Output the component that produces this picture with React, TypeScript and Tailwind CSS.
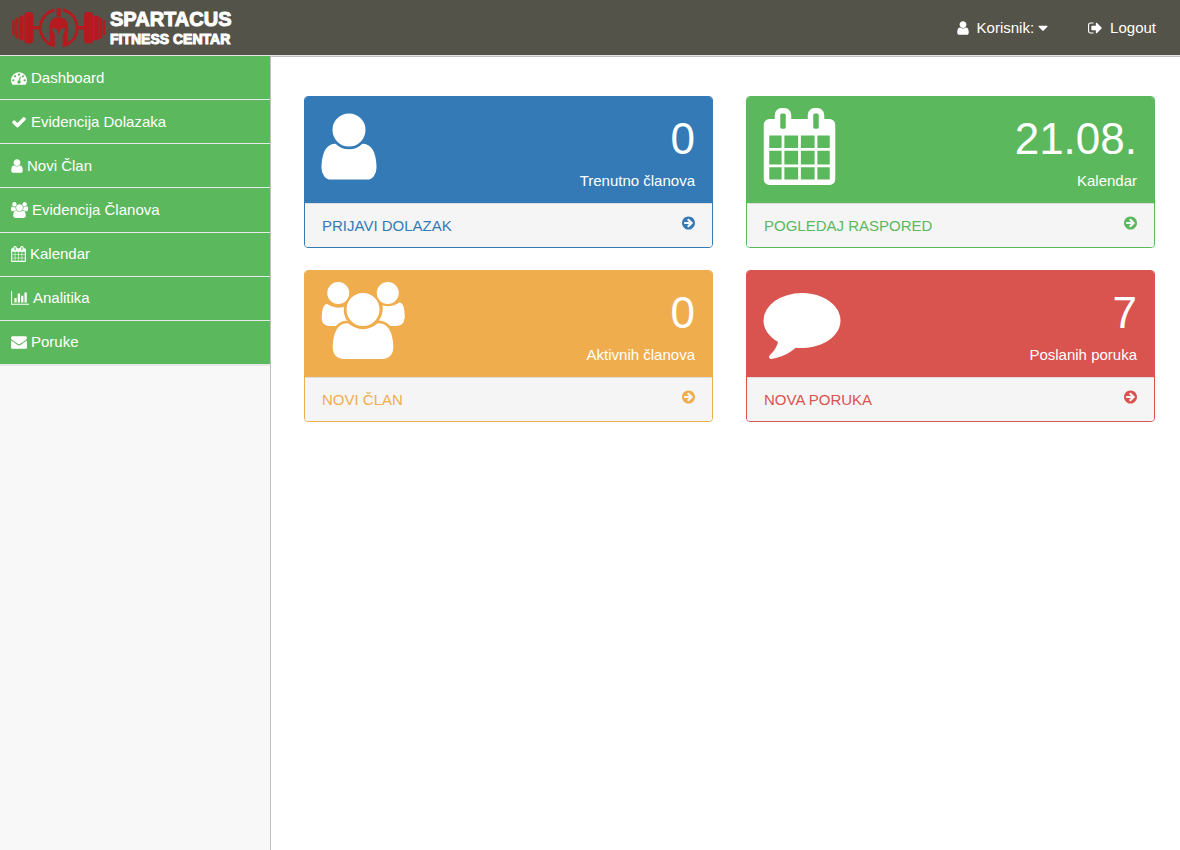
import React from "react";

type IconProps = { d: string; box?: string; className: string };

function Icon({ d, box = "0 0 1792 1792", className }: IconProps) {
  return (
    <svg viewBox={box} className={className} fill="currentColor" aria-hidden="true">
      <path d={d} />
    </svg>
  );
}

const USER =
  "M1536 1399q0 109-62.5 187t-150.5 78h-854q-88 0-150.5-78t-62.5-187q0-85 8.5-160.5t31.5-152 58.5-131 94-89 134.5-34.5q131 128 313 128t313-128q76 0 134.5 34.5t94 89 58.5 131 31.5 152 8.5 160.5zm-256-887q0 159-112.5 271.5t-271.5 112.5-271.5-112.5-112.5-271.5 112.5-271.5 271.5-112.5 271.5 112.5 112.5 271.5z";
const CHECK =
  "M1671 566q0 40-28 68l-724 724-136 136q-28 28-68 28t-68-28l-136-136-362-362q-28-28-28-68t28-68l136-136q28-28 68-28t68 28l294 295 656-657q28-28 68-28t68 28l136 136q28 28 28 68z";
const CALENDAR =
  "M192 1664h288v-288h-288v288zm352 0h320v-288h-320v288zm-352-352h288v-320h-288v320zm352 0h320v-320h-320v320zm-352-384h288v-288h-288v288zm736 736h320v-288h-320v288zm-384-736h320v-288h-320v288zm768 736h288v-288h-288v288zm-384-352h320v-320h-320v320zm-352-864v-288q0-13-9.5-22.5t-22.5-9.5h-64q-13 0-22.5 9.5t-9.5 22.5v288q0 13 9.5 22.5t22.5 9.5h64q13 0 22.5-9.5t9.5-22.5zm736 864h288v-320h-288v320zm-384-384h320v-288h-320v288zm384 0h288v-288h-288v288zm32-480v-288q0-13-9.5-22.5t-22.5-9.5h-64q-13 0-22.5 9.5t-9.5 22.5v288q0 13 9.5 22.5t22.5 9.5h64q13 0 22.5-9.5t9.5-22.5zm384-64v1280q0 52-38 90t-90 38h-1408q-52 0-90-38t-38-90v-1280q0-52 38-90t90-38h128v-96q0-66 47-113t113-47h64q66 0 113 47t47 113v96h384v-96q0-66 47-113t113-47h64q66 0 113 47t47 113v96h128q52 0 90 38t38 90z";
const USERS =
  "M657 896q-162 5-265 128h-134q-82 0-138-40.5t-56-118.5q0-353 124-353 6 0 43.5 21t97.5 42.5 119 21.5q67 0 133-23-5 37-5 66 0 159 93 290zm1071 637q0 120-73 189.5t-194 69.5h-874q-121 0-194-69.5t-73-189.5q0-53 3.5-103.5t14-109 26.5-108.5 43-97.5 62-81 85.5-53.5 111.5-20q10 0 43 21.5t73 48 107 48 135 21.5 135-21.5 107-48 73-48 43-21.5q61 0 111.5 20t85.5 53.5 62 81 43 97.5 26.5 108.5 14 109 3.5 103.5zm-1024-1277q0 106-75 181t-181 75-181-75-75-181 75-181 181-75 181 75 75 181zm704 384q0 159-112.5 271.5t-271.5 112.5-271.5-112.5-112.5-271.5 112.5-271.5 271.5-112.5 271.5 112.5 112.5 271.5zm576 225q0 78-56 118.5t-138 40.5h-134q-103-123-265-128 93-131 93-290 0-29-5-66 66 23 133 23 59 0 119-21.5t97.5-42.5 43.5-21q124 0 124 353zm-128-609q0 106-75 181t-181 75-181-75-75-181 75-181 181-75 181 75 75 181z";
const COMMENT =
  "M1792 896q0 174-120 321.5t-326 233-450 85.5q-70 0-145-8-198 175-460 242-49 14-114 22-17 2-30.5-9t-17.5-29v-1q-3-4-.5-12t2-10 4.5-9.5l6-9 7-8.5 8-9q7-8 31-34.5t34.5-38 31-39.5 32.5-51 27-59 26-76q-157-89-247.5-220t-90.5-281q0-130 71-248.5t191-204.5 286-136.5 348-50.5q244 0 450 85.5t326 233 120 321.5z";
const GAUGE =
  "M384 1152q0-53-37.5-90.5t-90.5-37.5-90.5 37.5-37.5 90.5 37.5 90.5 90.5 37.5 90.5-37.5 37.5-90.5zm192-448q0-53-37.5-90.5t-90.5-37.5-90.5 37.5-37.5 90.5 37.5 90.5 90.5 37.5 90.5-37.5 37.5-90.5zm428 481l101-382q6-26-7.5-48.5t-38.5-29.5-48 6.5-30 39.5l-101 382q-60 5-107 43.5t-63 98.5q-20 77 20 146t117 89 146-20 89-117q16-60-6-117t-72-91zm660-33q0-53-37.5-90.5t-90.5-37.5-90.5 37.5-37.5 90.5 37.5 90.5 90.5 37.5 90.5-37.5 37.5-90.5zm-640-640q0-53-37.5-90.5t-90.5-37.5-90.5 37.5-37.5 90.5 37.5 90.5 90.5 37.5 90.5-37.5 37.5-90.5zm448 192q0-53-37.5-90.5t-90.5-37.5-90.5 37.5-37.5 90.5 37.5 90.5 90.5 37.5 90.5-37.5 37.5-90.5zm320 448q0 261-141 483-19 29-54 29h-1402q-35 0-54-29-141-221-141-483 0-182 71-348t191-286 286-191 348-71 348 71 286 191 191 286 71 348z";
const CHART =
  "M640 896v512h-256v-512h256zm384-512v1024h-256v-1024h256zm1024 1152v128h-2048v-1536h128v1408h1920zm-640-896v768h-256v-768h256zm384-384v1152h-256v-1152h256z";
const ENVELOPE =
  "M1792 710v794q0 66-47 113t-113 47h-1472q-66 0-113-47t-47-113v-794q44 49 101 87 362 246 497 345 57 42 92.5 65.5t94.5 48 110 24.5h2q51 0 110-24.5t94.5-48 92.5-65.5q170-123 498-345 57-39 100-87zm0-294q0 79-49 151t-122 123q-376 261-468 325-10 7-42.5 31t-54 38.5-52 32.5-57.5 27-50 9h-2q-23 0-50-9t-57.5-27-52-32.5-54-38.5-42.5-31q-91-64-262-182.5t-205-142.5q-62-42-117-115.5t-55-136.5q0-78 41.5-130t118.5-52h1472q65 0 112.5 47t47.5 113z";
const ARROW =
  "M1413 896q0-27-18-45l-91-91-362-362q-18-18-45-18t-45 18l-91 91q-18 18-18 45t18 45l189 189h-502q-26 0-45 19t-19 45v128q0 26 19 45t45 19h502l-189 189q-19 19-19 45t19 45l91 91q18 18 45 18t45-18l362-362 91-91q18-18 18-45zm251 0q0 209-103 385.5t-279.5 279.5-385.5 103-385.5-103-279.5-279.5-103-385.5 103-385.5 279.5-279.5 385.5-103 385.5 103 279.5 279.5 103 385.5z";
const SIGN_OUT =
  "M704 1440q0 4 1 20t.5 26.5-3 23.5-10 19.5-20.5 6.5h-320q-119 0-203.5-84.5t-84.5-203.5v-704q0-119 84.5-203.5t203.5-84.5h320q13 0 22.5 9.5t9.5 22.5q0 4 1 20t.5 26.5-3 23.5-10 19.5-20.5 6.5h-320q-66 0-113 47t-47 113v704q0 66 47 113t113 47h312l11.5 1 11.5 3 8 5.5 7 9 2 13.5zm928-544q0 26-19 45l-544 544q-19 19-45 19t-45-19-19-45v-288h-448q-26 0-45-19t-19-45v-384q0-26 19-45t45-19h448v-288q0-26 19-45t45-19 45 19l544 544q19 19 19 45z";
const CARET =
  "M1408 704q0 26-19 45l-448 448q-19 19-45 19t-45-19l-448-448q-19-19-19-45t19-45 45-19h896q26 0 45 19t19 45z";

const menu = [
  { label: "Dashboard", d: GAUGE, box: "0 0 1792 1792", size: "h-4 w-4" },
  { label: "Evidencija Dolazaka", d: CHECK, box: "0 0 1792 1792", size: "h-4 w-4" },
  { label: "Novi Član", d: USER, box: "256 0 1280 1792", size: "h-4 w-3" },
  { label: "Evidencija Članova", d: USERS, box: "64 0 1920 1792", size: "h-4 w-[17px]" },
  { label: "Kalendar", d: CALENDAR, box: "64 0 1664 1792", size: "h-4 w-[15px]" },
  { label: "Analitika", d: CHART, box: "0 0 2048 1792", size: "h-4 w-[18px]" },
  { label: "Poruke", d: ENVELOPE, box: "0 0 1792 1792", size: "h-4 w-4" },
];

const cards = [
  {
    value: "0", label: "Trenutno članova", action: "PRIJAVI DOLAZAK",
    d: USER, box: "256 0 1280 1792", size: "h-[77px] w-[56px]",
    border: "border-[#337ab7]", bg: "bg-[#337ab7]", text: "text-[#337ab7]",
  },
  {
    value: "21.08.", label: "Kalendar", action: "POGLEDAJ RASPORED",
    d: CALENDAR, box: "64 0 1664 1792", size: "h-[77px] w-[73px]",
    border: "border-[#5cb85c]", bg: "bg-[#5cb85c]", text: "text-[#5cb85c]",
  },
  {
    value: "0", label: "Aktivnih članova", action: "NOVI ČLAN",
    d: USERS, box: "64 0 1920 1792", size: "h-[77px] w-[84px]",
    border: "border-[#f0ad4e]", bg: "bg-[#f0ad4e]", text: "text-[#f0ad4e]",
  },
  {
    value: "7", label: "Poslanih poruka", action: "NOVA PORUKA",
    d: COMMENT, box: "0 0 1792 1792", size: "h-[77px] w-[78px]",
    border: "border-[#d9534f]", bg: "bg-[#d9534f]", text: "text-[#d9534f]",
  },
];

function Emblem() {
  return (
    <svg viewBox="0 0 94 40" className="h-10 w-[94px] shrink-0" fill="#b41a1e" aria-hidden="true">
      <g>
        <rect x="0.2" y="12" width="2.4" height="15.500" rx="1" />
        <rect x="3.2" y="9.500" width="2.800" height="21.500" rx="1.200" />
        <rect x="6.7" y="7.500" width="4.800" height="25" rx="1.800" />
        <rect x="12.3" y="4" width="9.200" height="31.500" rx="3.500" />
        <rect x="21" y="18" width="7" height="3.400" />
      </g>
      <g transform="matrix(-1 0 0 1 93.500 0)">
        <rect x="0.2" y="12" width="2.4" height="15.500" rx="1" />
        <rect x="3.2" y="9.500" width="2.800" height="21.500" rx="1.200" />
        <rect x="6.7" y="7.500" width="4.800" height="25" rx="1.800" />
        <rect x="12.3" y="4" width="9.200" height="31.500" rx="3.500" />
        <rect x="21" y="18" width="7" height="3.400" />
      </g>
      <g fill="none" stroke="#b41a1e" strokeWidth="2.800">
        <path d="M42.500 1.900A18.500 18.500 0 0 0 41.500 37.600" />
        <path d="M51 1.900A18.500 18.500 0 0 1 52 37.600" />
      </g>
      <path d="M44.700 0.500Q46.700-.4 48.800.5V8.500H44.700z" />
      <path d="M46.700 9.200C40.500 9.200 37.300 13 37.300 19.500C37.300 24 39.300 30 36.800 37L42.800 39.200V27L39.800 20.500C43 20 45.400 20.800 45.800 24L46.700 26.500L47.600 24C48 20.800 50.500 20 53.700 20.500L50.700 27V39.200L56.700 37C54.200 30 56.200 24 56.200 19.500C56.200 13 53 9.200 46.700 9.200z" />
    </svg>
  );
}

export default function App() {
  return (
    <div className="flex min-h-screen flex-col bg-[#f8f8f8] font-['Liberation_Sans',Arial,sans-serif] text-[15px] leading-[22px] text-white">
      <header className="flex h-14 items-center justify-between border-b border-[#e7e7e7] bg-[#54534a] pr-6 pl-3">
        <a href="#" className="flex items-center gap-1" aria-label="Spartacus Fitness Centar">
          <Emblem />
          <span className="flex flex-col font-bold [-webkit-text-stroke:1px_white]">
            <span className="text-[20px] leading-[22px]">SPARTACUS</span>
            <span className="text-[14px] leading-[18px]">FITNESS CENTAR</span>
          </span>
        </a>
        <nav className="flex items-center gap-10">
          <button type="button" className="flex items-center">
            <Icon d={USER} box="256 0 1280 1792" className="mr-2 h-4 w-3" />
            Korisnik:
            <Icon d={CARET} box="384 0 1024 1792" className="ml-1 h-4 w-[10px]" />
          </button>
          <a href="#" className="flex items-center gap-2">
            <Icon d={SIGN_OUT} box="64 0 1600 1792" className="h-4 w-[14px]" />
            Logout
          </a>
        </nav>
      </header>
      <div className="flex flex-1">
        <aside className="w-[270px] shrink-0">
          <ul className="flex min-h-[310px] flex-col border-b border-[#e7e7e7]">
            {menu.map((m) => (
              <li key={m.label} className="flex flex-1 flex-col border-b border-[#e7e7e7] bg-[#5cb85c]">
                <a href="#" className="flex flex-1 items-center gap-1 px-[11px] py-[10px]">
                  <Icon d={m.d} box={m.box} className={m.size} />
                  {m.label}
                </a>
              </li>
            ))}
          </ul>
        </aside>
        <main className="flex-1 border-t border-l border-[#c0c0c0] bg-white pt-[39px] pr-[25px] pb-10 pl-[33px]">
          <div className="grid grid-cols-2 gap-x-[33px] gap-y-[22px]">
            {cards.map((c) => (
              <section key={c.action} className={`overflow-hidden rounded border ${c.border}`}>
                <div className={`flex items-start justify-between px-4 pt-[11px] pb-[11px] ${c.bg}`}>
                  <Icon d={c.d} box={c.box} className={c.size} />
                  <div className="pt-[5px] pr-px text-right">
                    <div className="text-[44px] leading-[51px]">{c.value}</div>
                    <div className="pt-[6px]">{c.label}</div>
                  </div>
                </div>
                <a href="#" className={`flex items-start justify-between border-t border-[#ddd] bg-[#f5f5f5] px-[17px] pt-[11px] pb-[10px] ${c.text}`}>
                  <span>{c.action}</span>
                  <Icon d={ARROW} box="128 0 1536 1792" className="h-4 w-[13px]" />
                </a>
              </section>
            ))}
          </div>
        </main>
      </div>
    </div>
  );
}
